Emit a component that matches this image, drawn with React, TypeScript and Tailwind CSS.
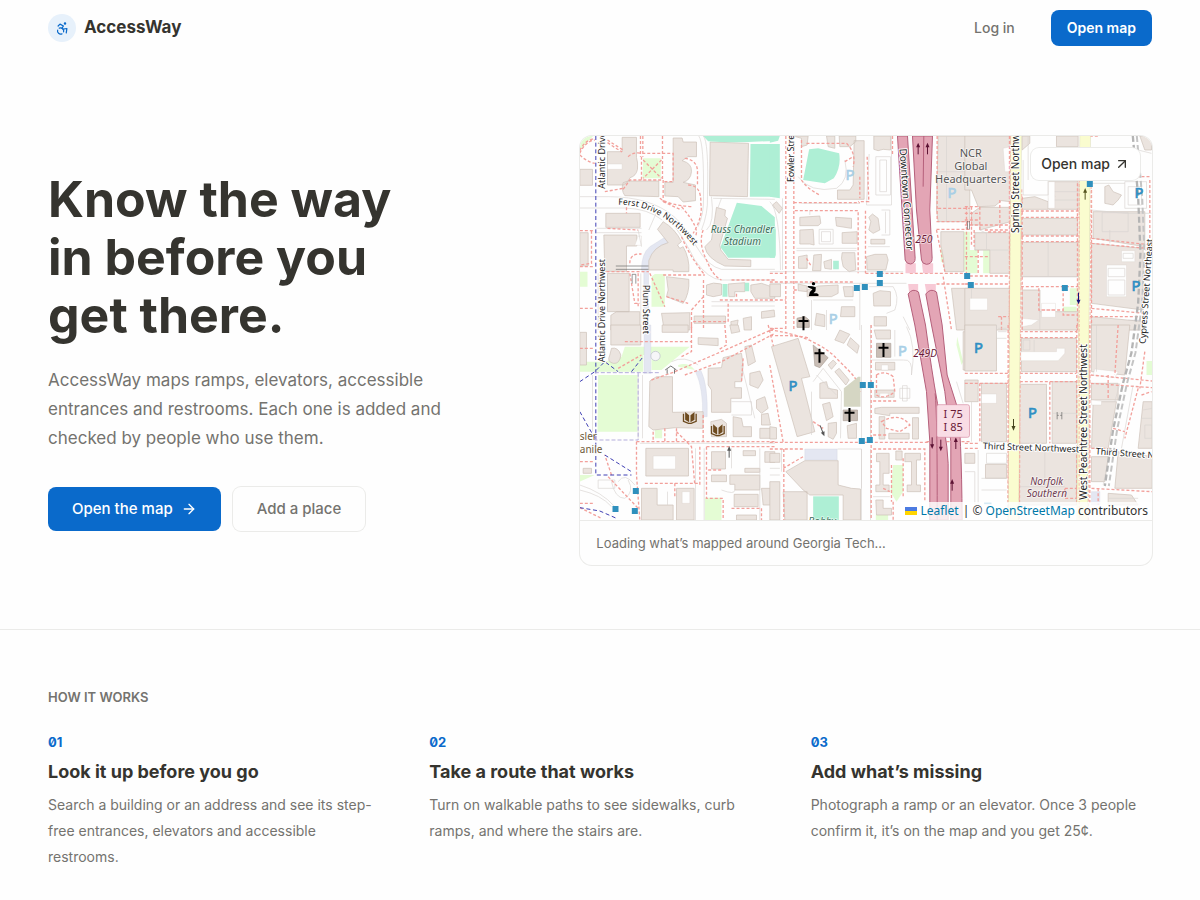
import { Accessibility, ArrowRight, ArrowUpRight } from 'lucide-react'

// One map tile. Coordinates inside a tile are local to x/y.
type Tile = {
  x: number
  y: number
  grass: string
  pitch: string
  pale: string
  buildings: string
  holes: string
  lines: string
  paths: string
}

const tiles: Tile[] = [
  {
    x: -15,
    y: -18,
    grass: 'M205 85H258V145H203ZM15 20Q40 15 55 18L15 60ZM15 425H38V470H15ZM240 432H270V530H230V440Z',
    pitch:
      'M527 42H600V200H525ZM385 18H600V32Q480 40 400 34ZM486 218L560 228 600 262V383H460L437 352ZM443 462H458V500H443ZM510 458H523V484H510Z',
    pale: 'M200 420Q200 370 225 350L270 322 280 338Q225 360 221 395V600H207V430Z',
    buildings:
      'M98 65H142V22H185V82Q190 98 188 118Q184 138 166 143Q160 160 145 165H98ZM15 118H53V166H15ZM295 24H322L325 36H365V80H340L322 92Q352 100 350 125Q348 150 325 157L362 165V212L325 216 310 200 270 198V157H295ZM160 153H252V200L150 197Q138 180 145 158ZM406 36L521 40 518 200 404 197ZM93 250H196V292H93ZM87 315H186V348H155V424H90ZM15 308H40V408H15ZM98 430H163V545H98ZM108 556L125 545H195V600H108ZM248 298L265 275Q300 295 320 335L308 345 315 355 325 350Q345 385 342 425H295V420H222V392Q235 350 280 338ZM275 440L342 448Q345 490 325 520L275 500 280 480ZM260 550L345 548V600H268ZM425 232L452 240 450 258 458 265 435 345 438 360 460 388 528 390V410L450 408Q395 385 390 350L410 330ZM358 558H452V580H358ZM395 465Q415 455 440 462V495L415 500 395 495ZM460 462L510 458V485H480V500H462ZM528 465L560 460 590 470 600 485V505H540L528 485ZM468 575L490 570 485 600H470ZM505 565L530 560V600H508ZM560 545L598 540 600 560 560 565Z',
    holes: 'M98 102H142V118H98ZM190 318H200V346H180Z',
    lines:
      'M15 200H100Q230 200 300 262Q340 300 365 350Q400 410 440 418H600M15 234H150Q220 236 262 270M300 290Q330 330 360 390Q400 448 440 450H600M385 18Q402 30 398 200Q400 250 380 300M372 18Q388 40 386 200Q388 250 370 290M410 200Q420 280 395 300M65 295H200M65 308H200M222 300L248 240M200 350L190 300M415 205L600 208M410 528H600M410 515H600M430 232L440 205M70 430V600M198 430V600',
    paths:
      'M15 70Q30 35 60 30M15 75Q35 95 60 100M15 62Q28 32 58 26M98 30Q120 45 145 60M98 38Q120 53 142 66M197 18V80M204 18V80M160 80Q175 65 200 70H295V155H265M200 80V150H265V215M263 18V150M205 90L260 145M260 90L205 145M330 85Q370 90 368 130V165M340 165Q380 165 378 220Q385 260 355 310M90 185L145 175M145 178L165 150H250M255 205Q280 225 350 230M265 215L320 240M155 232V250M15 302H60M50 302V400L15 405M98 295L190 300M95 425H222M15 410H60M15 535H60M265 435H390M320 320Q345 380 390 435M385 300Q370 340 395 390Q415 440 440 450M320 230Q380 300 360 320M386 450V600M350 600V540L386 500M435 510H600M355 575H460V520M485 500V485M165 400Q165 370 200 372M190 430V530M165 430L180 520H195M275 500L340 520M225 430L270 530M470 450H600',
  },
  {
    x: 570,
    y: -18,
    grass: 'M582 305H600V425H582ZM513 345L525 400 513 395Z',
    pitch:
      'M0 18H30L25 32 0 38ZM0 42H30V205L0 200ZM0 262Q15 275 18 300V375L15 383H0ZM118 58L145 55 208 70Q215 110 192 145L165 160 100 150ZM190 392H207V418H190Z',
    pale: '',
    buildings:
      'M70 18H115L112 45 95 50 95 25ZM208 18H258V35L240 50H210ZM170 18H195V55L175 50ZM312 18H362V60L340 58 325 62 312 58ZM253 32H283V208H203V180H240L250 165ZM90 262L150 258 153 280 145 287H90ZM197 262L245 265V295L200 288ZM90 300L130 298 133 345 120 342H90ZM217 308L262 305V340H217ZM86 380L112 375V415H86ZM132 375L155 373 153 422H128ZM162 395L185 388V418L165 415ZM217 368H255L258 420 238 425 220 410 215 385ZM297 262L308 252 325 265 330 300 310 310 297 300 303 275ZM303 328H345V342H303ZM290 380L315 373H350L355 390 348 420H292ZM85 462L112 468V485L85 482ZM112 480L145 468 205 465V490L185 500H112ZM220 470H250V500H225ZM0 462H32V500H0ZM310 490L330 482 362 485V528H312ZM313 560H350V588H313ZM215 530H255V560H212ZM140 550L165 555V590L135 585ZM82 565L105 560 118 570V592H82ZM8 225L20 215 38 235 28 250ZM505 18H600V275H505L500 240ZM513 305H582V425H525L520 380 513 345ZM545 475H600V600H560Z',
    holes: '',
    lines:
      'M318 80H362V195H318ZM330 90H350V185H330ZM335 240H360V315H335M347 245V310M148 298H190V342H148ZM155 305H182V335H155ZM80 355H260M80 362H260M0 425H400M0 460H410M298 72L290 225H365V18M38 205V420M95 220H270M120 240V255M295 350H360M270 460V600M298 470H370Q390 500 375 540L350 550M130 510H250M125 510V600M170 540V600M0 215Q30 240 32 420M505 125H600M530 18V275M420 600L400 560M85 140Q120 190 200 175Q240 150 225 90',
    paths:
      'M48 18V600M72 18V600M72 218H270M75 242H265V430M287 242V430M0 430H48M287 430H400M0 456H250M420 430H600M500 462H600M292 80L297 215H265M95 30V150Q110 175 150 195M110 40H230Q260 70 250 110M368 18V75M502 18V275H600M500 298H600M500 300L525 425M520 440L545 600M0 510H48M0 595H48M110 385L125 410M72 480H85M505 235H600M590 230V430M225 95L250 80M270 140V205',
  },
  {
    x: 1155,
    y: -18,
    grass: 'M8 360H38V430H8ZM55 360H75V430H55ZM315 475H340V525H315ZM295 530H335V555H295Z',
    pitch: '',
    pale: 'M490 570H525V600H490Z',
    buildings:
      'M0 18H137V215L110 212 90 228 40 230 20 180H0ZM45 232H137V275L45 300V285H20V250ZM30 308H137V430H75V360H30ZM172 205L210 200 250 215V238H172ZM252 155H340V238H252V205L270 200ZM170 265H338V315H170ZM168 337H345V440H168ZM172 480H225V545H340V600H172ZM0 475H135V600H0ZM385 245H540V350L385 325ZM380 340L535 355V540L380 520ZM420 170L432 165 445 185 470 195 460 210 445 225 420 220ZM525 18L560 20V60H540ZM380 560L540 575V600H380ZM172 18H195V40L172 60ZM275 18H340V50H275Z',
    holes:
      'M425 405H485V500H425ZM470 362H510V395H470ZM15 505H68V540H15ZM230 520H272V562H230ZM115 55L137 50V125H120ZM172 565L222 570 200 585 172 590ZM250 155H270V235H250Z',
    lines:
      'M175 90V195H250V150M270 185H340M270 210H340M45 300L65 310V358M30 360H137M190 18V150M412 248H490V305H412ZM435 300V340M480 155H545V235H480ZM490 170H530V225H490ZM170 440H345M430 415H480V440H430ZM430 450H480V495H430ZM475 370H505V385H475ZM380 240L480 250 560 250M380 160H480M520 60L560 70M225 480V600M250 337V440M20 475V505M540 360L560 365',
    paths:
      'M0 230H45V300M20 230V350M28 300V350M0 250H45M0 270H45M0 285H137M60 300H137M70 306H130M0 438H137M0 462H137M168 243H345M168 262H345M168 318H345M168 335H345M168 470H345M338 100V600M380 180V600M134 18V600M172 200V600M380 140H560M380 325L560 345M380 340L560 356M380 535L540 550M375 560H520M222 475V540H295M295 475V555H340M555 150V350M0 380H75M40 360V430M105 210V300M100 560H135M110 560V600M375 18H400M230 540H270',
  },
  {
    x: -15,
    y: 567,
    grass:
      'M70 150H188V320H68ZM150 65H345L260 135H230V90H205V140H15V110H90L140 95ZM390 518H440V585H390ZM240 315H262V340H240ZM15 450H60L15 470ZM310 120Q340 110 360 135Q340 130 310 125Z',
    pitch: '',
    pale: 'M208 0H228V145H208ZM362 140L378 136Q400 180 397 275H383Q386 190 362 140Z',
    buildings:
      'M108 0H198V60H108ZM15 22H35V120H15ZM110 70Q130 65 138 90Q135 118 115 115Q95 110 105 90ZM225 168L245 155H293V262L385 260V310L302 308 235 315 222 305ZM262 0H340V22H262ZM370 38L430 40V62L370 58ZM400 130L440 128 445 98 500 85 505 120 500 170H480V188H500V220H468V262H410V195L400 180ZM408 290L440 283 455 295V335H410ZM475 275L500 280 505 305H530V335H475ZM555 310H600V340H555ZM510 65L530 60 542 110 520 122ZM525 145L555 138 565 165 550 190 525 180ZM545 225L570 215 580 250 560 265 545 250ZM560 268L580 265 587 300H560ZM213 370H341V453H213ZM410 380H452V432H410ZM410 450H455V470H410ZM465 450H555V495H480V478H465ZM505 377H542V392H505ZM510 430H555V442H510ZM478 508H550V545H478ZM560 490H600V540H565ZM200 490H247V540H295V585H200ZM305 490H358V585H305ZM485 570H545V585H485ZM570 380H600V412H570ZM25 430H50V445H25ZM465 0H490L495 20 470 25Z',
    holes: 'M235 393H302V432H235ZM322 500H345V535H322Z',
    lines:
      'M203 150V340M190 150V340M53 150V320M440 495Q480 510 480 495M470 230H530V270H470M500 120L540 280M15 480Q80 500 120 545M15 495Q80 510 110 545M70 465H120V490H70ZM110 470Q120 520 150 520Q180 500 160 465M195 355H600M362 370V585M388 370V585M385 340V350M278 500V540M470 370V430M555 370V585M130 470Q150 440 180 480M290 110Q330 90 370 120',
    paths:
      'M230 165L300 140 370 110 600 10M330 150L440 110 600 25M350 0V80L320 95M150 50H350M185 350H600M185 350V450L195 585M210 475H375M300 475V520M305 320L350 365 360 480M395 365H600M395 365V520H445V585M400 435H440M470 550H560V585M235 320V350M305 310V350M270 310V350M100 455L190 550M110 450L90 390M385 270V350M375 365V480M450 0L455 60 430 75M130 130L200 90M15 70H60M15 410H60M15 535H60M580 0L600 80M505 100L500 170M15 548L80 580',
  },
  {
    x: 570,
    y: 567,
    grass: 'M370 420H400V500L380 530 362 500ZM318 570H355V585H318ZM562 35L580 110 575 120 560 60Z',
    pitch: 'M130 514H207V585H130Z',
    pale: 'M105 372H202V405H105Z',
    buildings:
      'M5 65L85 40 120 155 95 160 135 320 82 335ZM195 45L210 15 240 28 222 55ZM232 60L242 38 268 62 262 85ZM195 140L208 130 238 165 228 180ZM175 120L190 105 200 115 185 133ZM150 175L170 170 175 190 203 195V220H150ZM158 238L180 232 190 275 170 287ZM175 295L200 292V325L190 343 175 335ZM232 302L260 295V340H235ZM313 15H362V42H320ZM317 112H375V135H317ZM315 195H373V217H315ZM315 250L335 247H448V265H360V272L315 265ZM328 275H345V342H328ZM428 278H446V342H428ZM357 325H418V342H357ZM0 305L20 308V342H0ZM48 440L105 407H205V480L245 490 272 492V585H220V510H120L100 495ZM40 500H112V585H45ZM320 385H358V445H340V480H358V500H318V480H330V410H320ZM405 385H452V405H440V480H452V500H412V480H425V410H405ZM378 378H397V405H378ZM318 525H340V550H365V570H320ZM0 385H30V412H0ZM0 470H30V585H0ZM580 20H600V135H580Z',
    holes: 'M335 120H355V135H335ZM330 205H355V217H330Z',
    lines:
      'M275 0V340M275 372V585M203 372H275V490M160 130L215 200 212 340M305 105H400Q430 100 425 150Q440 60 410 5M390 190H420V220H390ZM398 182H412V228H398ZM375 15V95M130 170L160 130M140 150L200 210M35 372V440M0 430H30M0 450H30M302 0V340M302 372V585M310 515H360M560 170L580 235M125 200V330',
    paths:
      'M0 15Q120 30 190 90L240 140Q265 165 272 200M0 32Q90 30 120 40M0 120L40 352M0 352H480M0 372H100M42 372V585M304 0V585M310 372H465V530M320 150Q345 135 370 155L375 200Q345 225 320 210ZM335 290Q390 260 420 300L390 320 350 310ZM365 420V530M400 400V520M310 228H380M470 350H600M40 430L100 395M130 290L160 310M340 490L360 500M370 530V585M310 330H350',
  },
  {
    x: 1155,
    y: 567,
    grass: 'M545 108H562V150H545Z',
    pitch: '',
    pale: 'M380 500H405V540H380Z',
    buildings:
      'M0 0H95V138H0ZM0 165H40V230H0ZM50 175H125V350H50ZM162 178H245V355H162ZM262 170H335V355H262ZM170 40H335V140H170ZM162 375H335V540H162ZM380 0H495L480 150 380 140ZM380 175H460V225H380ZM385 230H455L430 370H380ZM380 395H430L420 470H380ZM460 380L562 395V490L450 490ZM535 230H562V370H520ZM430 505L500 510 520 540H430ZM62 418H125V460H62ZM0 385H30V415H0Z',
    holes:
      'M168 80H275V70H300V85L280 107H168ZM50 207H95V235H50ZM390 132L460 140 450 158 385 150ZM380 225L410 228V240H380Z',
    lines:
      'M175 45H195V75H175ZM208 45V80M262 265H335M240 378V485M162 485H300M50 460H125M50 495H125M65 385H125V415H65ZM20 230V350M95 0V40H125M100 10H125M100 20H125M535 255L562 250M530 280H562M540 300H562V340H540ZM430 520H520M435 380L415 480M465 175L450 230M505 180L470 370M40 375V540M0 440H30V540M395 0V140',
    paths:
      'M0 145H130M0 175H130M165 145H335M165 170H335M165 20H335M165 38H335M378 150L562 168M378 175L562 188M336 0V540M375 0V540M130 0V540M164 0V540M45 175V350M255 170V355M380 490L562 500M520 190L480 340M540 80L525 190M530 210L560 200M380 370H440M460 0L450 150M300 490H335V520H300ZM400 490V540M430 150V220M445 310L480 320M0 355H45M0 370H45',
  },
]

const markers = [
  [900, 414], [900, 441], [831, 456], [855, 453],
  [1530, 144], [1162, 420], [1173, 447], [1455, 456],
  [168, 1065], [107, 1119], [165, 1125],
  [849, 747], [873, 747], [846, 915], [870, 912],
]

const parking = [
  { x: 810, y: 132, faded: true },
  { x: 1116, y: 186, faded: true },
  { x: 760, y: 563, faded: true },
  { x: 968, y: 659, faded: true },
  { x: 1677, y: 185, faded: false },
  { x: 1668, y: 464, faded: false },
  { x: 639, y: 765, faded: false },
  { x: 1196, y: 651, faded: false },
  { x: 1358, y: 846, faded: false },
]

const churches = [
  [671, 562],
  [719, 659],
  [911, 642],
  [809, 837],
]

const arrows = [
  { x: 1015, y: 38, turn: 0, color: '#5c1233' },
  { x: 1043, y: 38, turn: 0, color: '#5c1233' },
  { x: 1516, y: 174, turn: 0, color: '#55551f' },
  { x: 1496, y: 487, turn: 180, color: '#101078' },
  { x: 448, y: 948, turn: 0, color: '#555555' },
  { x: 1057, y: 921, turn: 180, color: '#5c1233' },
  { x: 1083, y: 928, turn: 180, color: '#5c1233' },
  { x: 1128, y: 922, turn: 0, color: '#5c1233' },
  { x: 1117, y: 1047, turn: 0, color: '#5c1233' },
  { x: 727, y: 884, turn: 158, color: '#555555' },
  { x: 1301, y: 866, turn: 180, color: '#44441c' },
]

const streets = [
  { text: 'Atlantic Drive Northwest', x: 77, y: 158, turn: -90, size: 27 },
  { text: 'Atlantic Drive Northwest', x: 75, y: 679, turn: -90, size: 27 },
  { text: 'Plum Street', x: 191, y: 446, turn: 90, size: 27 },
  { text: 'Fowler Street Northwest', x: 644, y: 138, turn: -90, size: 27 },
  { text: 'Downtown Connector', x: 959, y: 38, turn: 86, size: 30 },
  { text: 'Spring Street Northwest', x: 1317, y: 291, turn: -90, size: 30 },
  { text: 'West Peachtree Street Northwest', x: 1521, y: 1091, turn: -90, size: 30 },
  { text: 'Cypress Street Northeast', x: 1697, y: 624, turn: -86, size: 27 },
  { text: 'Third Street Northwest', x: 1209, y: 939, turn: 2, size: 27 },
  { text: 'Third Street Northwest', x: 1547, y: 955, turn: 4, size: 27 },
]

const steps = [
  {
    number: '01',
    title: 'Look it up before you go',
    text: 'Search a building or an address and see its step-free entrances, elevators and accessible restrooms.',
  },
  {
    number: '02',
    title: 'Take a route that works',
    text: 'Turn on walkable paths to see sidewalks, curb ramps, and where the stairs are.',
  },
  {
    number: '03',
    title: 'Add what’s missing',
    text: 'Photograph a ramp or an elevator. Once 3 people confirm it, it’s on the map and you get 25¢.',
  },
]

function CampusMap() {
  return (
    <svg
      viewBox="0 0 1716 1152"
      preserveAspectRatio="xMidYMid slice"
      className="block h-96 w-full bg-[#fefefe] font-['Noto_Sans',sans-serif]"
      role="img"
      aria-label="Map of the streets around Georgia Tech"
      fill="none"
    >
      {tiles.map((t) => (
        <g key={`${t.x},${t.y}`} transform={`translate(${t.x} ${t.y})`}>
          <path d={t.grass} fill="#e4fcd4" />
          <path d={t.pale} fill="#e4e7f2" stroke="#cfd2de" strokeWidth="1" />
          <path d={t.buildings} fill="#ebe4df" stroke="#cbbfb6" strokeWidth="2" />
          <path d={t.holes} fill="#fefefe" stroke="#d8cfc8" strokeWidth="1" />
          <path d={t.pitch} fill="#aeefd5" />
          <path d={t.lines} stroke="#d9d5d2" strokeWidth="2" />
          <path d={t.paths} stroke="#f2a09b" strokeWidth="4" strokeDasharray="9 6" />
        </g>
      ))}

      {/* churches, olive park and the fountain */}
      <path
        d="M700 627L745 665 720 695 705 689ZM790 822H833V854H790ZM890 622H933V664H890ZM652 547L675 542 688 552V574H652Z"
        fill="#c9beb6"
        stroke="#ada198"
        strokeWidth="2"
      />
      <path d="M792 757L835 722H842V812H792Z" fill="#d5d6c3" />
      <circle cx="227" cy="660" r="14" fill="#f6f6f8" stroke="#b9bcc8" strokeWidth="2" />
      <path d="M108 390H206M108 400H206" stroke="#666" strokeWidth="2" />
      <path
        d="M157 443V415H168V443M1163 255V280M1169 255V280M1432 828V850M1446 828V850M1432 838H1437M1441 838H1446"
        stroke="#666"
        strokeWidth="2"
      />
      <path d="M256 702L273 690 290 702M262 700V713M284 700V713" stroke="#777" strokeWidth="3" />

      {/* bike paths */}
      <path
        d="M48 0V1017H155M0 737L45 707 75 677 115 707M75 957L155 1007M0 827L45 907M0 1115L60 1125 110 1147M155 707L190 662"
        stroke="#3f3fb4"
        strokeWidth="3"
        strokeDasharray="12 8"
      />
      <path d="M45 710H240M175 710V912H45" stroke="#b4aedb" strokeWidth="3" strokeDasharray="12 6" />

      {/* primary roads */}
      <path d="M1309 0L1301 1152M1516 0L1507 1152" stroke="#dcdcb8" strokeWidth="33" />
      <path d="M1309 0L1301 1152M1516 0L1507 1152" stroke="#fafccf" strokeWidth="30" />
      <path d="M1292 0L1284 1152M1326 160L1318 1152M1498 60V1152M1534 150L1526 1152" stroke="#f3b6a8" strokeWidth="3" strokeDasharray="9 5" />

      {/* railway */}
      <path d="M1659 0L1675 182 1682 352 1675 502 1655 650 1630 740 1600 880 1575 1050" stroke="#b4b4b4" strokeWidth="7" strokeDasharray="18 9" />
      <path d="M1671 0L1687 182 1694 352 1687 502 1667 650 1642 740 1612 880 1587 1050" stroke="#c4c4c4" strokeWidth="6" strokeDasharray="18 9" />

      {/* interstate */}
      <g transform="translate(570 -18)">
        <path d="M407 400H438V430H407ZM456 400H490V430H460ZM415 462H445V490H418ZM465 462H498V490H470Z" fill="#f7c9d5" />
        <path
          d="M383 18H413L436 385Q436 400 422 402Q410 402 406 390ZM428 18H488L480 240 487 385Q487 402 470 403Q457 402 455 390L440 240ZM415 492Q428 473 446 486L467 585Q485 720 503 820Q530 900 535 1000V1170H480V935L470 785 435 585ZM468 492Q482 473 500 486L517 585 532 735 562 830Q575 900 577 1170H543V935L525 785 485 585Z"
          fill="#e3a5b5"
          stroke="#b5607b"
          strokeWidth="3"
        />
        <path d="M462 18L460 170M496 790Q503 860 502 1170" stroke="#b5607b" strokeWidth="3" />
      </g>

      {markers.map(([x, y]) => (
        <rect key={`${x},${y}`} x={x - 9} y={y - 9} width="18" height="18" fill="#2f90bd" />
      ))}

      {churches.map(([x, y]) => (
        <path key={`${x},${y}`} d={`M${x} ${y - 21}V${y + 21}M${x - 15} ${y - 7}H${x + 15}`} stroke="#000" strokeWidth="6" />
      ))}

      {/* libraries */}
      {[[330, 844], [414, 881]].map(([x, y]) => (
        <g key={x} transform={`translate(${x} ${y})`}>
          <path d="M-14 -16L-2 -6V15L-14 7ZM14 -16L2 -6V15L14 7Z" fill="#6d4b1f" />
          <path d="M-19 -11V12L-4 18H4L19 12V-11" stroke="#6d4b1f" strokeWidth="4" />
        </g>
      ))}

      {/* statue */}
      <g fill="#000">
        <circle cx="701" cy="443" r="5" />
        <path d="M684 450L698 451 708 454 707 466 701 472H711L716 475V480H687L690 468 698 460 684 454Z" />
      </g>

      {arrows.map((a) => (
        <g key={`${a.x},${a.y}`} transform={`translate(${a.x} ${a.y}) rotate(${a.turn})`}>
          <path d="M0 17V-8" stroke={a.color} strokeWidth="3" />
          <path d="M0 -18L6 -4H-6Z" fill={a.color} />
        </g>
      ))}

      {parking.map((p) => (
        <text
          key={`${p.x},${p.y}`}
          x={p.x}
          y={p.y}
          textAnchor="middle"
          fontSize="44"
          fill={p.faded ? '#a9cfe6' : '#2f8fc4'}
          stroke={p.faded ? '#a9cfe6' : '#2f8fc4'}
          strokeWidth="2"
        >
          P
        </text>
      ))}
      <path d="M1213 1102H1235" stroke="#2f8fc4" strokeWidth="5" />

      <g fill="#222" stroke="#fff" strokeWidth="6" strokeLinejoin="round" paintOrder="stroke">
        {streets.map((s) => (
          <text key={`${s.x},${s.y}`} transform={`translate(${s.x} ${s.y}) rotate(${s.turn})`} fontSize={s.size}>
            {s.text}
          </text>
        ))}
        <path id="ferst" d="M115 206Q250 206 350 340" fill="none" stroke="none" />
        <text fontSize="26">
          <textPath href="#ferst">Ferst Drive Northwest</textPath>
        </text>
      </g>

      <g stroke="#fff" strokeOpacity="0.6" strokeWidth="5" strokeLinejoin="round" paintOrder="stroke" textAnchor="middle">
        <g fill="#3d6f5b" fontSize="30" fontStyle="italic">
          <text x="488" y="292">Russ Chandler</text>
          <text x="488" y="328">Stadium</text>
          <text x="727" y="1166">Bobby</text>
        </g>
        <g fill="#555" fontSize="33">
          <text x="1173" y="62">NCR</text>
          <text x="1173" y="101">Global</text>
          <text x="1173" y="141">Headquarters</text>
        </g>
        <g fill="#6f3c50" fontSize="30" fontStyle="italic">
          <text x="1401" y="1048">Norfolk</text>
          <text x="1401" y="1084">Southern</text>
        </g>
        <g fill="#6b1a38" fontSize="31" fontStyle="italic">
          <text x="1032" y="320">250</text>
          <text x="1036" y="662">249D</text>
        </g>
        <g fill="#6e5a3a" fontSize="30" textAnchor="start">
          <text x="0" y="912">sler</text>
          <text x="0" y="951">anile</text>
        </g>
      </g>

      <rect x="1071" y="806" width="98" height="98" rx="6" fill="#f9dde5" stroke="#d68ba1" strokeWidth="2" />
      <g fill="#6b1a38" fontSize="33" textAnchor="middle">
        <text x="1120" y="847">I 75</text>
        <text x="1120" y="886">I 85</text>
      </g>
    </svg>
  )
}

function Header() {
  return (
    <header className="flex h-14 items-center justify-between px-12">
      <a href="#" className="flex items-center gap-2 text-[17px] font-bold text-[#35342f]">
        <span className="flex size-7 items-center justify-center rounded-full bg-[#e7f1fb] text-[#0a6acb]">
          <Accessibility size={15} />
        </span>
        AccessWay
      </a>
      <nav className="flex items-center gap-5 text-sm">
        <a href="#login" className="px-4 py-2 font-medium text-[#74736f]">
          Log in
        </a>
        <a href="#map" className="flex h-9 items-center rounded-lg bg-[#0a6acb] px-4 font-semibold text-white">
          Open map
        </a>
      </nav>
    </header>
  )
}

function Hero() {
  return (
    <section className="grid grid-cols-[5fr_6fr] items-center gap-14 border-b border-[#ebebe9] px-12 pt-20 pb-16">
      <div>
        <h1 className="text-[50px] leading-[58px] font-bold text-[#35342f]">
          Know the way
          <br />
          in before you
          <br />
          get there.
        </h1>
        <p className="mt-[22px] max-w-[420px] text-[17px] leading-[29px] text-[#74736f]">
          AccessWay maps ramps, elevators, accessible entrances and restrooms. Each one is added and checked by people
          who use them.
        </p>
        <div className="mt-[34px] flex gap-3 text-[15px] font-medium">
          <a href="#map" className="flex h-11 items-center gap-2 rounded-lg bg-[#0a6acb] px-6 text-white">
            Open the map
            <ArrowRight size={16} />
          </a>
          <button type="button" className="h-11 rounded-lg px-6 text-[#74736f] ring-1 ring-[#ebebe9]">
            Add a place
          </button>
        </div>
      </div>

      <div className="overflow-hidden rounded-xl ring-1 ring-[#ebebe9]">
        <div className="relative">
          <CampusMap />
          <a
            href="#map"
            className="absolute top-3 right-3 flex h-8 items-center gap-1 rounded-lg bg-white px-2.5 text-sm font-medium text-[#35342f] ring-1 ring-[#ebebe9]"
          >
            Open map
            <ArrowUpRight size={16} />
          </a>
          <div className="absolute right-0 bottom-0 flex items-center gap-1 bg-white/80 px-1 font-['Noto_Sans',sans-serif] text-xs leading-[18px] text-[#333]">
            <a href="#leaflet" className="flex items-center gap-1 text-[#0078a8]">
              <svg viewBox="0 0 12 8" className="h-2 w-3">
                <path fill="#4c7be1" d="M0 0h12v4H0z" />
                <path fill="#ffd500" d="M0 4h12v4H0z" />
              </svg>
              Leaflet
            </a>
            <span>
              | © <a href="#osm" className="text-[#0078a8]">OpenStreetMap</a> contributors
            </span>
          </div>
        </div>
        <p className="border-t border-[#ebebe9] px-4 py-3 text-[13px] leading-5 text-[#74736f]">
          Loading what’s mapped around Georgia Tech…
        </p>
      </div>
    </section>
  )
}

function HowItWorks() {
  return (
    <section className="px-12 py-14">
      <h2 className="text-[13px] leading-[22px] font-semibold text-[#74736f]">HOW IT WORKS</h2>
      <div className="mt-6 grid grid-cols-3 gap-10">
        {steps.map((s) => (
          <div key={s.number}>
            <p className="text-[13px] leading-5 font-bold text-[#0a6acb] slashed-zero">{s.number}</p>
            <h3 className="mt-2 text-lg leading-6 font-bold text-[#35342f]">{s.title}</h3>
            <p className="mt-2 text-sm leading-[26px] text-[#74736f]">{s.text}</p>
          </div>
        ))}
      </div>
    </section>
  )
}

export default function App() {
  return (
    <main className="min-h-screen bg-[#fefefe] font-['Inter','Liberation_Sans',sans-serif]">
      <Header />
      <Hero />
      <HowItWorks />
    </main>
  )
}
